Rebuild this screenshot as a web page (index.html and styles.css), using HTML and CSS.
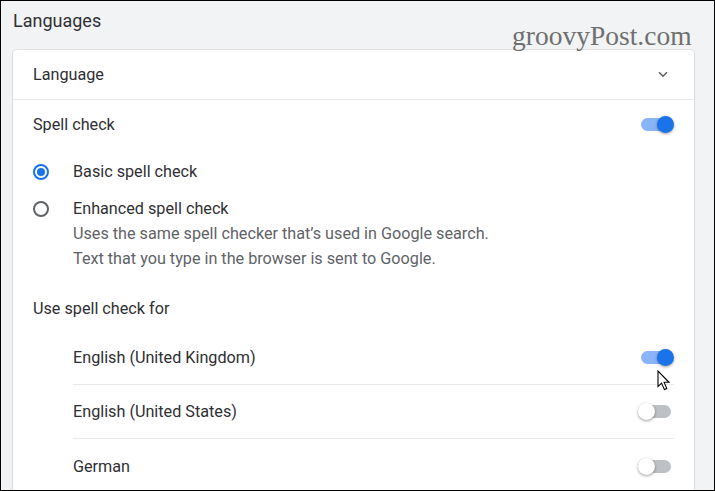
FILE: index.html
```html
<!DOCTYPE html>
<html>
<head>
<meta charset="utf-8">
<link rel="stylesheet" href="styles.css">
</head>
<body>
<div class="frame">
  <div class="page-title">Languages</div>
  <div class="watermark">groovyPost.com</div>
  <div class="card">
    <div class="row row-lang">
      <span class="label">Language</span>
      <svg class="chevron" width="10" height="7" viewBox="0 0 10 7"><path d="M1 1.2 L5 5.2 L9 1.2" fill="none" stroke="#5f6368" stroke-width="1.6"/></svg>
    </div>
    <div class="row row-spell">
      <span class="label">Spell check</span>
      <span class="toggle on"><span class="knob"></span></span>
    </div>
    <div class="radio-row radio-basic">
      <span class="radio checked"></span>
      <span class="label">Basic spell check</span>
    </div>
    <div class="radio-row radio-enh">
      <span class="radio"></span>
      <div class="radio-text">
        <span class="label">Enhanced spell check</span>
        <span class="desc">Uses the same spell checker that’s used in Google search.</span>
        <span class="desc">Text that you type in the browser is sent to Google.</span>
      </div>
    </div>
    <div class="row row-use">
      <span class="label">Use spell check for</span>
    </div>
    <div class="lang-list">
      <div class="lang-item">
        <span class="label">English (United Kingdom)</span>
        <span class="toggle on"><span class="knob"></span></span>
      </div>
      <div class="lang-item">
        <span class="label">English (United States)</span>
        <span class="toggle"><span class="knob"></span></span>
      </div>
      <div class="lang-item">
        <span class="label">German</span>
        <span class="toggle"><span class="knob"></span></span>
      </div>
    </div>
  </div>
  <svg class="cursor" width="14" height="22" viewBox="0 0 14 22"><path d="M1 1 L1 16.5 L4.6 13.1 L7.4 19.6 L9.8 18.6 L7.1 12.3 L12 12.3 Z" fill="#fff" stroke="#000" stroke-width="1.1" stroke-linejoin="miter"/></svg>
</div>
</body>
</html>
```
FILE: styles.css
```css
* { box-sizing: border-box; }
html, body { margin: 0; padding: 0; }
body {
  font-family: Roboto, "Noto Sans", Arial, sans-serif;
  color: #2f3034;
  font-size: 16.2px;
}
.frame {
  position: relative;
  width: 715px;
  height: 491px;
  border: 1px solid #000;
  background: #f1f3f4;
  overflow: hidden;
  padding: 0 20px 0 12px;
}
.page-title {
  font-size: 18px;
  height: 49px;
  padding-top: 9px;
}
.watermark {
  position: absolute;
  left: 511px;
  top: 19px;
  font-family: "Liberation Serif", "Times New Roman", serif;
  font-size: 27.5px;
  color: #6f6f6f;
}
.card {
  background: #fff;
  border-radius: 4px;
  box-shadow: 0 0 0 1px rgba(60,64,67,0.08), 0 1px 2px rgba(60,64,67,0.15);
  height: 500px;
}
.row {
  display: flex;
  align-items: center;
  justify-content: space-between;
  padding: 0 20px;
}
.row-lang {
  height: 50px;
  border-bottom: 1px solid #e8eaed;
}
.chevron { margin-right: 6px; }
.row-spell { height: 48px; }
.radio-row {
  display: flex;
  align-items: flex-start;
  padding-left: 20px;
}
.radio-basic { margin-top: 12px; height: 37px; }
.radio-basic .radio { margin-top: 4px; }
.radio-basic .label { line-height: 24px; }
.radio {
  width: 16px;
  height: 16px;
  border-radius: 50%;
  border: 2px solid #5f6368;
  margin: 4px 24px 0 0;
  flex: none;
  position: relative;
}
.radio.checked { border-color: #1a73e8; }
.radio.checked::after {
  content: "";
  position: absolute;
  left: 2px; top: 2px;
  width: 8px; height: 8px;
  border-radius: 50%;
  background: #1a73e8;
}
.radio-text {
  display: flex;
  flex-direction: column;
}
.radio-text .label { line-height: 24px; }
.desc {
  color: #5f6368;
  line-height: 25px;
}
.row-use {
  height: 48px;
  margin-top: 13px;
}
.lang-list {
  padding: 0 20px 0 60px;
  margin-top: -1px;
}
.lang-item {
  display: flex;
  align-items: center;
  justify-content: space-between;
  height: 54px;
  border-bottom: 1px solid #e8eaed;
}
.lang-item:last-child { border-bottom: none; }
.toggle {
  position: relative;
  width: 30px;
  height: 13px;
  border-radius: 7px;
  background: #bdc1c6;
  margin-right: 3px;
}
.toggle .knob {
  position: absolute;
  top: -2px;
  left: -3px;
  width: 17px;
  height: 17px;
  border-radius: 50%;
  background: #fff;
  box-shadow: 0 1px 3px rgba(0,0,0,0.4);
}
.toggle.on { background: #8ab4f8; }
.toggle.on .knob {
  left: auto;
  right: -3px;
  background: #1a73e8;
}
.cursor {
  position: absolute;
  left: 656px;
  top: 369px;
}
```
